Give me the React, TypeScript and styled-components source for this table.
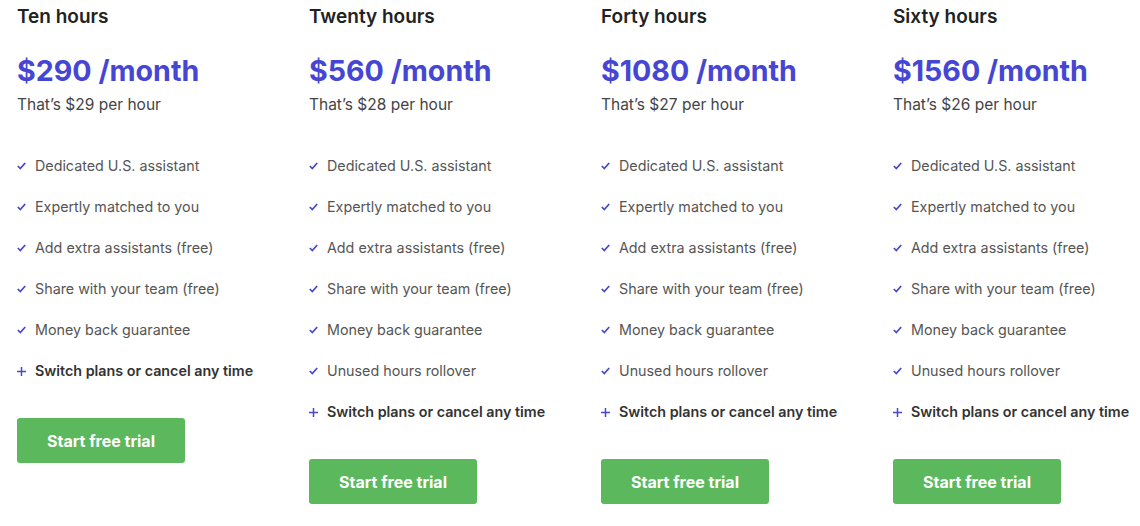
import React from 'react';
import styled, { createGlobalStyle } from 'styled-components';

const Purple = '#4646d4';
const IconColor = '#4848c8';

const GlobalStyle = createGlobalStyle`
  body {
    margin: 0;
    background: #ffffff;
    font-family: Inter, "Noto Sans", sans-serif;
    overflow: hidden;
  }
`;

const PlansRow = styled.div`
  display: grid;
  grid-template-columns: repeat(4, 292px);
  padding: 4px 0 0 17px;
  width: 1140px;
  box-sizing: border-box;
`;

const PlanColumn = styled.div`
  display: flex;
  flex-direction: column;
  align-items: flex-start;
`;

const PlanTitle = styled.h3`
  margin: 0;
  font-size: 19px;
  font-weight: 600;
  color: #222222;
  line-height: 26px;
`;

const Price = styled.div`
  margin-top: 23px;
  font-size: 28.6px;
  font-weight: 700;
  color: ${Purple};
  line-height: 36px;
`;

const PerHour = styled.div`
  margin-top: 4px;
  font-size: 15.5px;
  color: #444444;
  line-height: 24px;
`;

const FeatureList = styled.ul`
  list-style: none;
  margin: 38px 0 0;
  padding: 0;
  display: flex;
  flex-direction: column;
  gap: 19px;
`;

const Feature = styled.li<{ $bold?: boolean }>`
  display: flex;
  align-items: center;
  gap: 9px;
  font-size: 14.3px;
  line-height: 22px;
  color: ${({ $bold }) => ($bold ? '#333333' : '#555555')};
  font-weight: ${({ $bold }) => ($bold ? 600 : 400)};
  white-space: nowrap;
`;

const IconBox = styled.span`
  width: 9px;
  display: inline-flex;
  justify-content: center;
  flex-shrink: 0;
`;

const TrialButton = styled.button`
  margin-top: 36px;
  width: 168px;
  height: 45px;
  border: none;
  border-radius: 3px;
  background: #5cb85c;
  color: #ffffff;
  font-family: inherit;
  font-size: 16px;
  font-weight: 700;
  cursor: pointer;
`;

const Check = () => (
  <svg width="9" height="8" viewBox="0 0 9 8">
    <path d="M0.8 4 L3.3 6.6 L8.2 1" fill="none" stroke={IconColor} strokeWidth="1.7" />
  </svg>
);

const Plus = () => (
  <svg width="9" height="9" viewBox="0 0 9 9">
    <path d="M4.5 0 V9 M0 4.5 H9" fill="none" stroke={IconColor} strokeWidth="1.5" />
  </svg>
);

const plans = [
  { title: 'Ten hours', price: 290, rate: 29, rollover: false },
  { title: 'Twenty hours', price: 560, rate: 28, rollover: true },
  { title: 'Forty hours', price: 1080, rate: 27, rollover: true },
  { title: 'Sixty hours', price: 1560, rate: 26, rollover: true },
];

const baseFeatures = [
  'Dedicated U.S. assistant',
  'Expertly matched to you',
  'Add extra assistants (free)',
  'Share with your team (free)',
  'Money back guarantee',
];

function App() {
  return (
    <>
      <GlobalStyle />
      <PlansRow>
        {plans.map((plan) => {
          const features = plan.rollover ? [...baseFeatures, 'Unused hours rollover'] : baseFeatures;
          return (
            <PlanColumn key={plan.title}>
              <PlanTitle>{plan.title}</PlanTitle>
              <Price>${plan.price} /month</Price>
              <PerHour>That’s ${plan.rate} per hour</PerHour>
              <FeatureList>
                {features.map((f) => (
                  <Feature key={f}>
                    <IconBox><Check /></IconBox>
                    {f}
                  </Feature>
                ))}
                <Feature $bold>
                  <IconBox><Plus /></IconBox>
                  Switch plans or cancel any time
                </Feature>
              </FeatureList>
              <TrialButton>Start free trial</TrialButton>
            </PlanColumn>
          );
        })}
      </PlansRow>
    </>
  );
}

export default App;
